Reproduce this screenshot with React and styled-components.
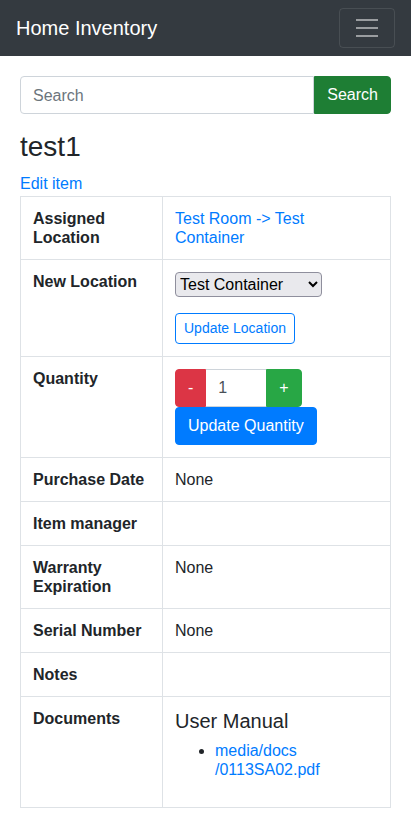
import React from "react";
import styled, { createGlobalStyle } from "styled-components";

const GlobalStyle = createGlobalStyle`
  * { box-sizing: border-box; }
  body {
    margin: 0;
    font-family: "Liberation Sans", Arial, sans-serif;
    font-size: 16px;
    line-height: 1.5;
    color: #212529;
    background: #fff;
  }
`;

const Navbar = styled.nav`
  height: 56px;
  background: #343a40;
  display: flex;
  align-items: center;
  justify-content: space-between;
  padding: 0 16px;
`;

const Brand = styled.a`
  color: #fff;
  font-size: 20px;
  line-height: 30px;
  text-decoration: none;
`;

const Toggler = styled.button`
  width: 56px;
  height: 40px;
  background: transparent;
  border: 1px solid rgba(255, 255, 255, 0.1);
  border-radius: 4px;
  display: flex;
  align-items: center;
  justify-content: center;
  padding: 0;
`;

const Container = styled.main`
  padding: 20px 20px 16px;
`;

const SearchForm = styled.form`
  display: flex;
  margin-bottom: 16px;
`;

const SearchInput = styled.input`
  flex: 1;
  min-width: 0;
  height: 38px;
  padding: 7px 12px 5px;
  font: inherit;
  color: #495057;
  border: 1px solid #ced4da;
  border-radius: 4px 0 0 4px;
  &::placeholder { color: #6c757d; }
`;

const Button = styled.button`
  font-family: inherit;
  font-size: ${(p) => (p.$small ? "14px" : "16px")};
  line-height: ${(p) => (p.$small ? "21px" : "24px")};
  padding: ${(p) => (p.$small ? "4px 8px" : "6px 12px")};
  color: ${(p) => (p.$outline ? p.$bg : "#fff")};
  background: ${(p) => (p.$outline ? "#fff" : p.$bg)};
  border: 1px solid ${(p) => p.$bg};
  border-radius: ${(p) => p.$radius || "4px"};
  cursor: pointer;
  display: inline-block;
`;

const Title = styled.h3`
  font-size: 28px;
  font-weight: 500;
  line-height: 1.2;
  margin: 0 0 8px;
`;

const Link = styled.a`
  color: #007bff;
  text-decoration: none;
`;

const LocationLink = styled(Link)`
  display: inline-block;
  max-width: 190px;
`;

const Table = styled.table`
  width: 100%;
  border-collapse: collapse;
  border: 1px solid #dee2e6;
  line-height: 19px;
`;

const Th = styled.th`
  width: 142px;
  text-align: left;
  vertical-align: top;
  padding: 12px;
  border: 1px solid #dee2e6;
  font-weight: bold;
`;

const Td = styled.td`
  vertical-align: top;
  padding: 12px;
  border: 1px solid #dee2e6;
`;

const Select = styled.select`
  font-family: inherit;
  font-size: 16px;
  color: #000;
  width: 147px;
  height: 25px;
  margin-bottom: 16px;
  display: block;
  background-color: #e9e9ed;
  border: 1px solid #8f8f9d;
  border-radius: 4px;
`;

const QtyGroup = styled.div`
  display: flex;
  height: 38px;
`;

const QtyInput = styled.input`
  width: 60px;
  height: 38px;
  padding: 6px 12px;
  font: inherit;
  line-height: 24px;
  color: #495057;
  border: 1px solid #ced4da;
  border-left: 0;
  border-right: 0;
`;

const DocTitle = styled.h5`
  font-size: 20px;
  font-weight: 500;
  line-height: 24px;
  margin: 0 0 8px;
`;

const DocList = styled.ul`
  margin: 0 0 16px;
  padding-left: 40px;
`;

const rows = [
  ["Purchase Date", "None"],
  ["Item manager", ""],
  ["Warranty Expiration", "None"],
  ["Serial Number", "None"],
  ["Notes", ""],
];

export default function App() {
  return (
    <>
      <GlobalStyle />
      <Navbar>
        <Brand href="#">Home Inventory</Brand>
        <Toggler aria-label="Toggle navigation">
          <svg width="30" height="30" viewBox="0 0 30 30">
            <path
              d="M4 7h22M4 15h22M4 23h22"
              stroke="rgba(255,255,255,0.5)"
              strokeWidth="2"
            />
          </svg>
        </Toggler>
      </Navbar>
      <Container>
        <SearchForm onSubmit={(e) => e.preventDefault()}>
          <SearchInput placeholder="Search" />
          <Button $bg="#1e7e34" $radius="0 4px 4px 0">Search</Button>
        </SearchForm>
        <Title>test1</Title>
        <Link href="#">Edit item</Link>
        <Table>
          <tbody>
            <tr>
              <Th>Assigned Location</Th>
              <Td>
                <LocationLink href="#">Test Room -&gt; Test Container</LocationLink>
              </Td>
            </tr>
            <tr>
              <Th>New Location</Th>
              <Td>
                <Select defaultValue="c">
                  <option value="c">Test Container</option>
                </Select>
                <Button $small $outline $bg="#007bff">Update Location</Button>
              </Td>
            </tr>
            <tr>
              <Th>Quantity</Th>
              <Td>
                <QtyGroup>
                  <Button $bg="#dc3545" $radius="4px 0 0 4px">-</Button>
                  <QtyInput defaultValue="1" />
                  <Button $bg="#28a745" $radius="0 4px 4px 0">+</Button>
                </QtyGroup>
                <Button $bg="#007bff">Update Quantity</Button>
              </Td>
            </tr>
            {rows.map(([label, value]) => (
              <tr key={label}>
                <Th>{label}</Th>
                <Td>{value}</Td>
              </tr>
            ))}
            <tr>
              <Th>Documents</Th>
              <Td>
                <DocTitle>User Manual</DocTitle>
                <DocList>
                  <li>
                    <Link href="#">media/docs<wbr />/0113SA02.pdf</Link>
                  </li>
                </DocList>
              </Td>
            </tr>
          </tbody>
        </Table>
      </Container>
    </>
  );
}
